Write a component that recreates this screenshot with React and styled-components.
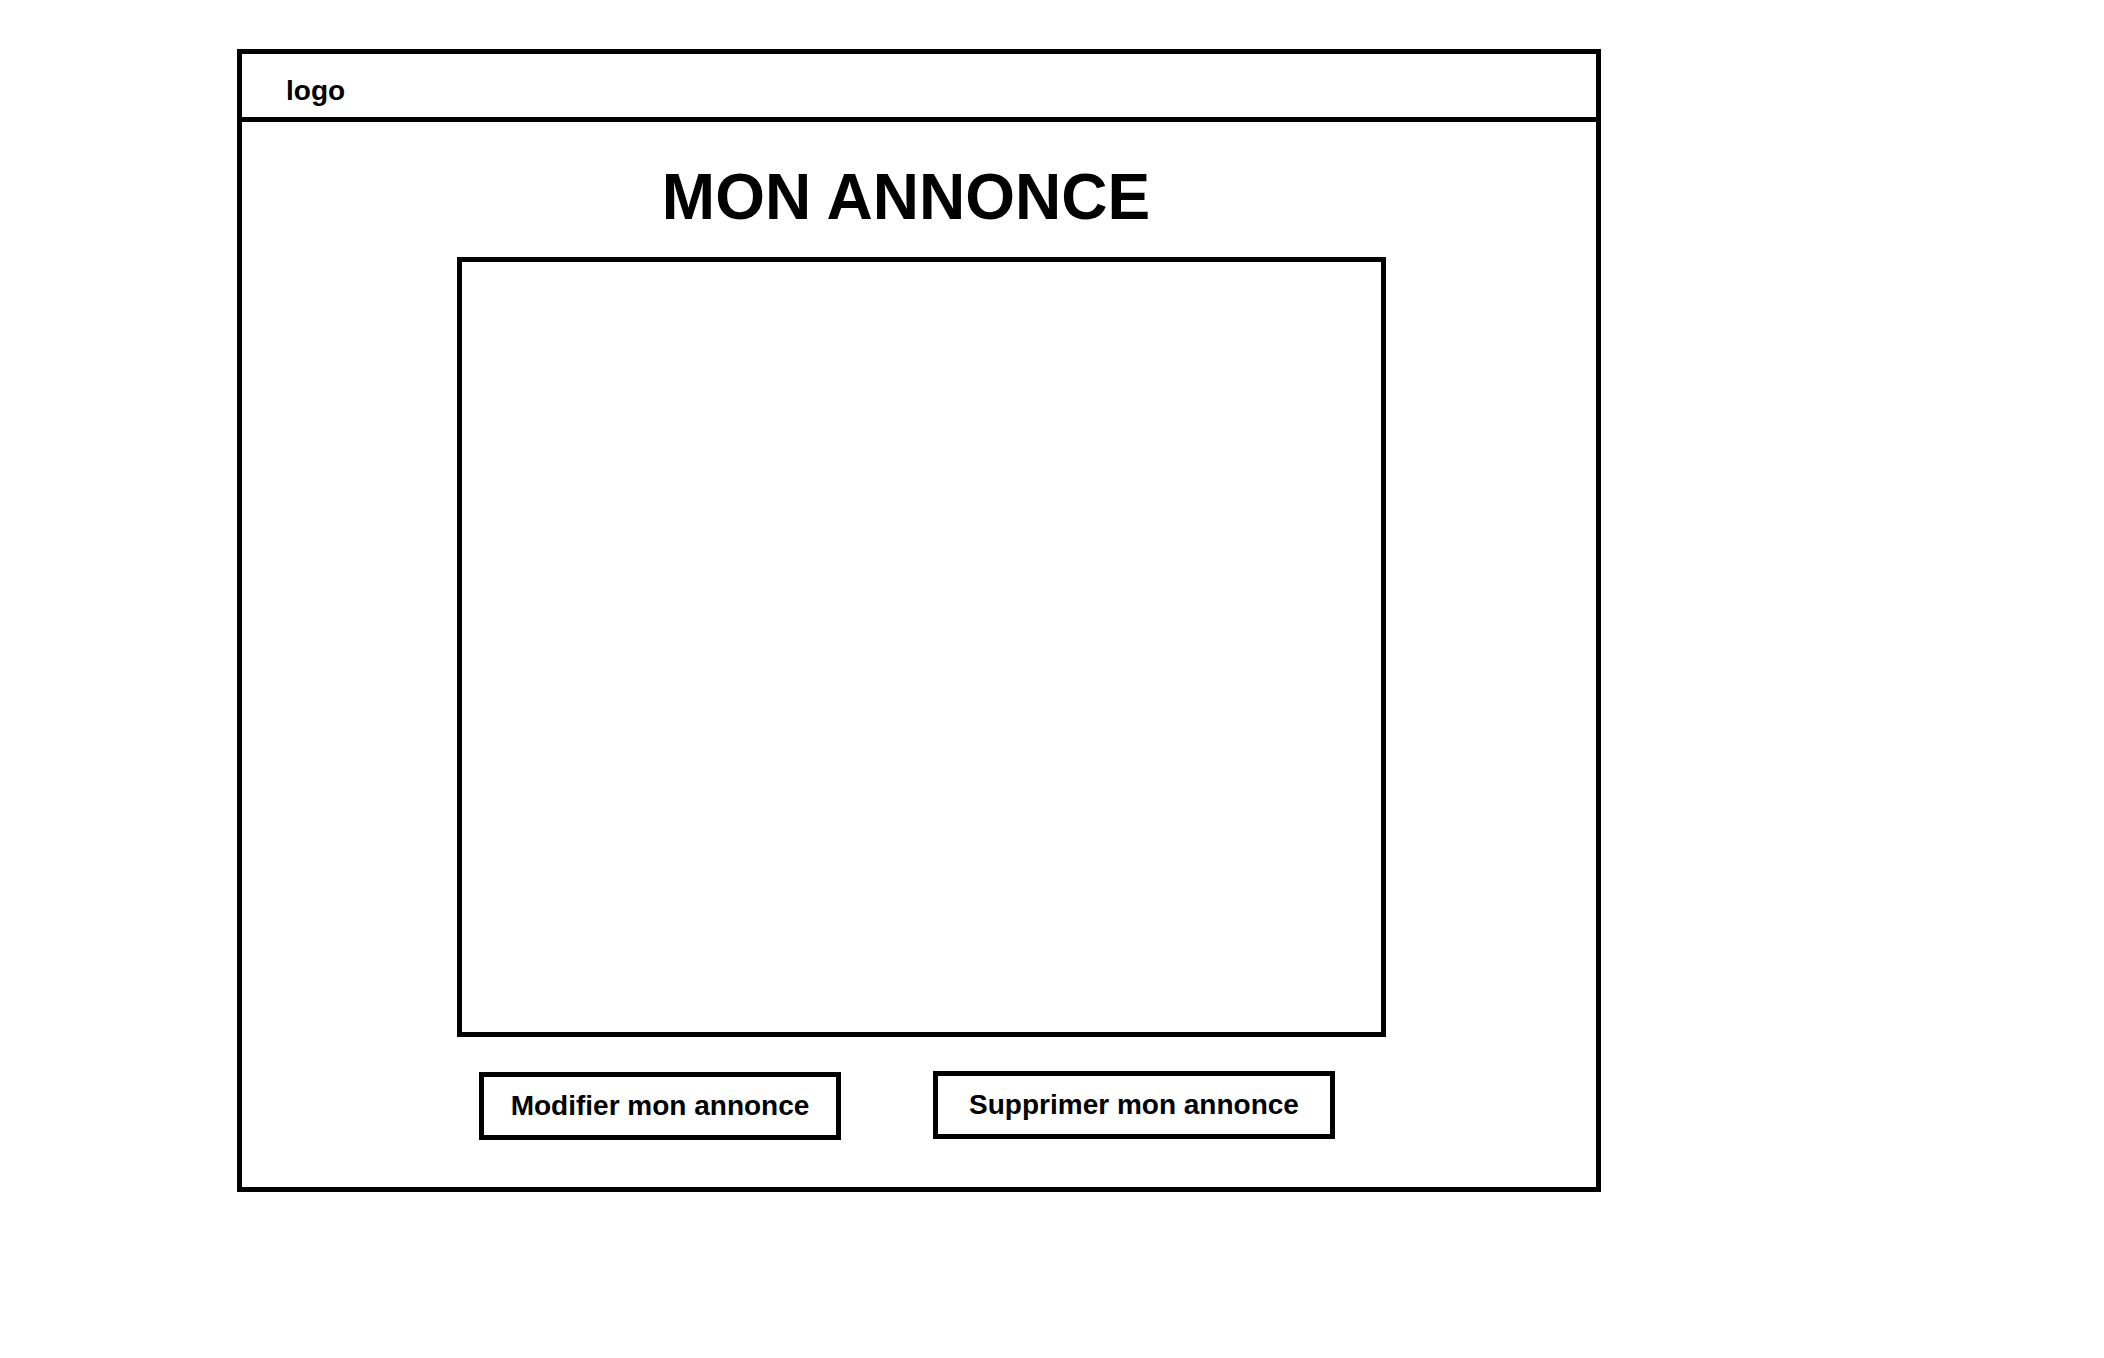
import React from "react";
import styled, { createGlobalStyle } from "styled-components";

const GlobalStyle = createGlobalStyle`
  body {
    margin: 0;
    background: #fff;
    font-family: "Liberation Sans", Arial, sans-serif;
    color: #000;
  }
`;

const App = () => {
  return (
    <>
      <GlobalStyle />
      <StyledFrame>
        <StyledHeader>
          <StyledLogo>logo</StyledLogo>
        </StyledHeader>
        <StyledMain>
          <StyledTitle>MON ANNONCE</StyledTitle>
          <StyledPicture />
          <StyledActions>
            <StyledButton $width={362}>Modifier mon annonce</StyledButton>
            <StyledButton $width={402} $up>
              Supprimer mon annonce
            </StyledButton>
          </StyledActions>
        </StyledMain>
      </StyledFrame>
    </>
  );
};

export default App;

const StyledFrame = styled.div`
  box-sizing: border-box;
  width: 1364px;
  margin: 49px 0 0 237px;
  border: 5px solid #000;
`;

const StyledHeader = styled.header`
  box-sizing: border-box;
  height: 68px;
  padding: 21px 0 0 44px;
  border-bottom: 5px solid #000;
`;

const StyledLogo = styled.div`
  font-size: 28px;
  font-weight: 700;
`;

const StyledMain = styled.main`
  padding: 43px 0 47px;
`;

const StyledTitle = styled.h1`
  margin: 0;
  padding-right: 26px;
  font-size: 64px;
  line-height: 64px;
  font-weight: 700;
  text-align: center;
`;

const StyledPicture = styled.div`
  box-sizing: border-box;
  width: 929px;
  height: 780px;
  margin: 28px 0 0 215px;
  border: 5px solid #000;
`;

const StyledActions = styled.div`
  display: flex;
  align-items: flex-start;
  gap: 92px;
  margin: 34px 0 0 237px;
`;

const StyledButton = styled.button`
  box-sizing: border-box;
  display: flex;
  align-items: center;
  justify-content: center;
  width: ${(p) => p.$width}px;
  height: 68px;
  margin-top: ${(p) => (p.$up ? "0" : "1px")};
  padding: 0;
  background: #fff;
  border: 5px solid #000;
  border-radius: 0;
  font-family: "Liberation Sans", Arial, sans-serif;
  font-size: 28px;
  font-weight: 700;
  color: #000;
  cursor: pointer;
`;
